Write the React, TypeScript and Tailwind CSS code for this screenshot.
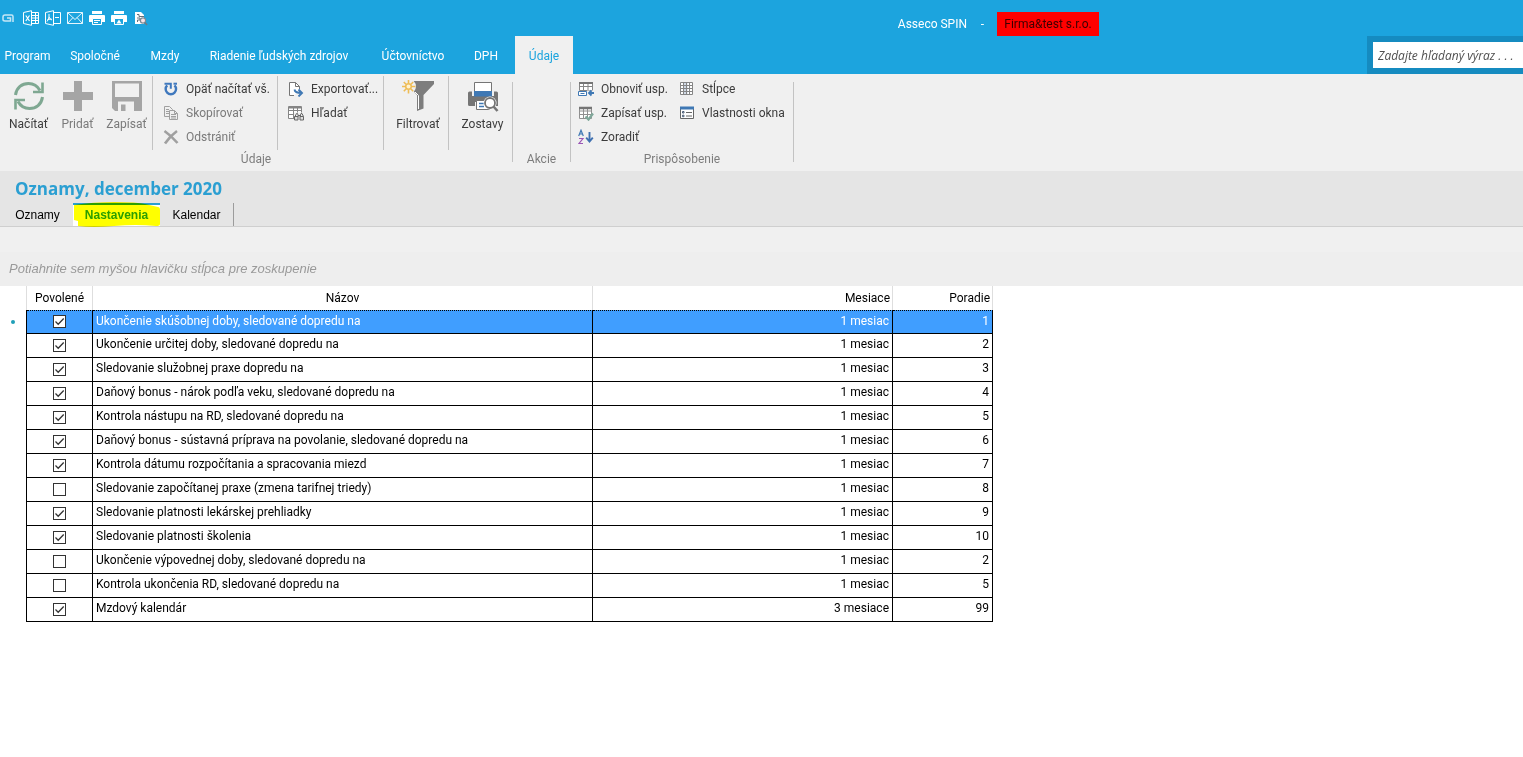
import type { ReactNode } from 'react';

type IconProps = { className?: string };

function MiniLogo() {
  return (
    <svg viewBox="0 0 12 16" className="h-4 w-3" fill="none" stroke="#c5e6f6" strokeWidth="1.500">
      <path d="M11 12V6.500Q11 5 9.500 5H3Q1 5 1 7v2.500Q1 11 3 11h5.500V8H5" />
    </svg>
  );
}

function ExcelIcon() {
  return (
    <svg viewBox="0 0 16 16" className="size-4" fill="none" stroke="#fff">
      <path d="M.5 2.500 8.500.700v14.600L.5 13.500zM8.500 2.500h7v11h-7M12.500 2.500v11M8.500 5.500h7M8.500 8h7M8.500 10.500h7" />
      <path d="M2.800 5.500l3.700 5.500M6.500 5.500 2.800 11" strokeWidth="1.200" />
    </svg>
  );
}

function PdfIcon() {
  return (
    <svg viewBox="0 0 16 16" className="size-4" fill="none" stroke="#fff">
      <path d="M.5 2.500 8.500.700v14.600L.5 13.500zM8.500 2.500h7v11h-7M10 7.500h4" />
      <path d="M4 4v3q0 2-2 4.500M4 7q1 2.500 3 3M2.500 9.500 6.500 9" />
    </svg>
  );
}

function MailIcon() {
  return (
    <svg viewBox="0 0 16 16" className="size-4" fill="none" stroke="#e6f6fd">
      <path d="M.5 2.500h15v11H.5zM.5 2.500 8 9.500l7.500-7M.5 13.500l5.500-6M15.500 13.500l-5.500-6" />
    </svg>
  );
}

function PrinterIcon({ preview }: { preview?: boolean }) {
  return (
    <svg viewBox="0 0 16 16" className="size-4">
      <path d="M3 1h10v3H3zM1 5h14q1 0 1 1v6h-3V9H3v3H0V6q0-1 1-1z" fill="#fff" />
      <path d="M3.500 8.500h9v6h-9z" fill="#1ca4de" stroke="#fff" />
      {preview ? (
        <path d="M8 9.500l2.500 4h-5z" fill="#fff" />
      ) : (
        <path d="M5 10.500h6M5 12.500h4" stroke="#fff" />
      )}
    </svg>
  );
}

function DocSearchIcon() {
  return (
    <svg viewBox="0 0 16 16" className="size-4">
      <path d="M2 2h6l3 3v9H2z" fill="#fff" />
      <path d="M4 4.500h2v2h5M4 8h3v2H4.500v2" stroke="#65727c" fill="none" />
      <circle cx="10" cy="10.500" r="2.600" fill="#f8e4e8" stroke="#7b8a96" strokeWidth="1.200" />
      <path d="M12 12.500l2 2.500" stroke="#6d7a86" strokeWidth="1.600" />
    </svg>
  );
}

function RefreshIcon({ className }: IconProps) {
  return (
    <svg viewBox="0 0 32 32" className={className} fill="none" stroke="#7fa892" strokeWidth="3">
      <path d="M2.500 15C3.500 7.500 9 3.500 15.500 3.500c5 0 9 2.500 11.500 7" />
      <path d="M29.500 2.500v9.500H20" strokeWidth="2.600" />
      <path d="M29.500 17C28.500 24.500 23 28.500 16.500 28.500c-5 0-9-2.500-11.500-7" />
      <path d="M2.500 29.500V20H12" strokeWidth="2.600" />
    </svg>
  );
}

function PlusIcon({ className }: IconProps) {
  return (
    <svg viewBox="0 0 32 32" className={className} fill="#a5a5a5">
      <path d="M12 1h8v11h11v8H20v11h-8V20H1v-8h11z" />
    </svg>
  );
}

function DiskIcon({ className }: IconProps) {
  return (
    <svg viewBox="0 0 32 32" className={className}>
      <path d="M1 1h30v30H4l-3-3z" fill="#a5a5a5" />
      <path d="M4 3.500h24V17H4zM7 21.500h16V31H7z" fill="#f0f0f0" />
      <path d="M10 24.500h4.500V31H10z" fill="#a5a5a5" />
    </svg>
  );
}

function FunnelIcon({ className }: IconProps) {
  return (
    <svg viewBox="0 0 32 32" className={className}>
      <path d="M10 1h22v3L21.500 15v13.500L15 31V15L9.500 9z" fill="#7d7d7d" />
      <path d="M13 12l3.500 3.500V29" stroke="#fff" fill="none" />
      <circle cx="6.500" cy="6.500" r="7.500" fill="#f0f0f0" />
      <path
        d="M6.500 0v3M6.500 10v3.500M0 6.500h3M10 6.500h3.500M1.800 2l2.200 2.200M9 9l2.200 2.200M11.200 2 9 4.200M4 9l-2.200 2.200"
        stroke="#eebc55"
        strokeWidth="1.600"
      />
      <circle cx="6.500" cy="6.500" r="2.800" fill="#fff2cf" stroke="#eebc55" strokeWidth="1.500" />
    </svg>
  );
}

function ReportsIcon({ className }: IconProps) {
  return (
    <svg viewBox="0 0 32 32" className={className}>
      <path d="M1 13q0-1.500 1.500-1.500H5V16h22v-4.500h2.500Q31 11.500 31 13v13h-6v-4H8v4H2.500Q1 26 1 24.500z" fill="#757575" />
      <path d="M7.500 2.500h17V12h-17z" fill="#fff" stroke="#757575" />
      <path d="M7 11h18v5.500H7z" fill="#3f78b4" />
      <path d="M9.500 20.500h13v9h-13z" fill="#fff" stroke="#757575" />
      <path d="M12 23.500h5M12 26.500h5" stroke="#3f78b4" strokeWidth="1.300" />
      <circle cx="23" cy="23" r="6.500" fill="#fff" />
      <circle cx="23" cy="23" r="5" fill="#fff" stroke="#757575" strokeWidth="1.800" />
      <path d="M26.500 26.500 30.500 31" stroke="#757575" strokeWidth="2.600" />
    </svg>
  );
}

function ReloadIcon() {
  return (
    <svg viewBox="0 0 16 16" className="size-4" fill="none" stroke="#3f78bd" strokeWidth="2.400">
      <path d="M4.200 4.300A5.200 5.200 0 1 0 11.500 4.300" />
      <path d="M1.500 2.700h6.300v5" strokeWidth="2" />
      <path d="M10.500 2.700h3.500" strokeWidth="2" />
    </svg>
  );
}

function CopyIcon() {
  return (
    <svg viewBox="0 0 16 16" className="size-4" fill="#f0f0f0" stroke="#a0a0a0">
      <path d="M1.500 1.500h5l3 3v7h-8z" />
      <path d="M3 4.500h3M3 6.500h4M3 8.500h3" />
      <path d="M6.500 5.500h5l3 3v6h-8z" />
      <path d="M11.500 5.500v3h3M8 9.500h5M8 11.500h5M8 13h5" fill="none" />
    </svg>
  );
}

function DeleteIcon() {
  return (
    <svg viewBox="0 0 16 16" className="size-4" fill="none" stroke="#a0a0a0" strokeWidth="2.600">
      <path d="M1.500 2Q8 6.500 14.500 14M14 2Q7 7 2 14.500" />
    </svg>
  );
}

function ExportIcon() {
  return (
    <svg viewBox="0 0 16 16" className="size-4" fill="none">
      <path d="M6 14.500H1.500v-13h6l4 4V8" fill="#fff" stroke="#757575" />
      <path d="M7.500 1.500v4h4" stroke="#757575" />
      <path d="M6.500 8.500Q7 12 13.500 12M10.500 8.500l3.500 3.500-3.500 3.500" stroke="#3f78b4" strokeWidth="1.900" />
    </svg>
  );
}

function FindIcon() {
  return (
    <svg viewBox="0 0 16 16" className="size-4" fill="none" stroke="#858585">
      <path d="M.5 1.500h13v12H.5zM.5 5.500h13M.5 9.500h13M5.500 3v10M9.500 3v10" fill="#fff" />
      <path d="M1 2.500h12" strokeWidth="2" />
      <path d="M6 7.500h10v8H6z" fill="#f0f0f0" stroke="none" />
      <path d="M7 11.500 8.500 8.500h1l1 3M15.500 11.500 14 8.500h-1l-1 3M10 10.500h3" stroke="#666" />
      <path d="M6.500 11.500h3.500v3.500H6.500zM12 11.500h3.500v3.500H12z" fill="#ddd" stroke="#666" />
    </svg>
  );
}

function RestoreLayoutIcon() {
  return (
    <svg viewBox="0 0 16 16" className="size-4" fill="none">
      <path d="M1.500 1.500h13v8h-13zM1.500 5.500h13M5.500 2v7.500M10 2v7.500" fill="#fff" stroke="#858585" />
      <path d="M1 2h14" stroke="#757575" strokeWidth="2" />
      <path d="M9 9.500h7V15H9z" fill="#f0f0f0" />
      <path d="M.5 10.500h8v4h-8zM2.500 12.500h4" fill="#fff" stroke="#3f78b4" />
      <path d="M16 12H11M13.500 9.500 11 12l2.500 2.500" stroke="#3f78b4" strokeWidth="1.800" />
    </svg>
  );
}

function SaveLayoutIcon() {
  return (
    <svg viewBox="0 0 16 16" className="size-4" fill="none">
      <path d="M1.500 2.500h12v11h-12zM1.500 6h12M1.500 9.500h12M5.500 3v10M9.500 3v10" fill="#fff" stroke="#909090" />
      <path d="M1 3h13" stroke="#757575" strokeWidth="2.500" />
      <path d="M7.500 11.500l3 3L15 8.500" stroke="#7fa89a" strokeWidth="2.300" />
    </svg>
  );
}

function SortIcon() {
  return (
    <svg viewBox="0 0 16 16" className="size-4" fill="none">
      <path d="M.7 7 3 1.200 5.300 7M1.500 5h3" stroke="#3f78b4" strokeWidth="1.200" />
      <path d="M1 9.500h4L1 14.500h4" stroke="#9a55b5" strokeWidth="1.200" />
      <path d="M11.500 3v9.500M8.200 8.700l3.300 3.800 3.300-3.800" stroke="#3f70b0" strokeWidth="1.900" />
    </svg>
  );
}

function ColumnsIcon() {
  return (
    <svg viewBox="0 0 16 16" className="size-4" fill="none">
      <path d="M1.500 1.500h12v12h-12z" fill="#fff" />
      <path d="M4.500 2h4v11h-4z" fill="#cfd9e6" />
      <path d="M1.500 1.500h12v12h-12zM1.500 4.500h12M1.500 7.500h12M1.500 10.500h12M4.500 2v11M7.500 2v11M10.500 2v11" stroke="#858585" />
    </svg>
  );
}

function WindowIcon() {
  return (
    <svg viewBox="0 0 16 16" className="size-4" fill="none">
      <path d="M1.500 2.500h13v11h-13z" fill="#fff" stroke="#666" />
      <path d="M1 3h14" stroke="#3f78b4" strokeWidth="3" />
      <path d="M7 7.500h6M7 11h6" stroke="#666" />
      <path d="M3.500 6.500h1.500v1.500H3.500zM3.500 10.200h1.500v1.500H3.500z" stroke="#4c5f78" />
    </svg>
  );
}

const menuTabs = [
  { label: 'Program', width: 'w-[55px]' },
  { label: 'Spoločné', width: 'w-20' },
  { label: 'Mzdy', width: 'w-[60px]' },
  { label: 'Riadenie ľudských zdrojov', width: 'w-[168px]' },
  { label: 'Účtovníctvo', width: 'w-[100px]' },
  { label: 'DPH', width: 'w-[46px]' },
];

const rows = [
  { on: true, name: 'Ukončenie skúšobnej doby, sledované dopredu na', months: '1 mesiac', order: 1 },
  { on: true, name: 'Ukončenie určitej doby, sledované dopredu na', months: '1 mesiac', order: 2 },
  { on: true, name: 'Sledovanie služobnej praxe dopredu na', months: '1 mesiac', order: 3 },
  { on: true, name: 'Daňový bonus - nárok podľa veku, sledované dopredu na', months: '1 mesiac', order: 4 },
  { on: true, name: 'Kontrola nástupu na RD, sledované dopredu na', months: '1 mesiac', order: 5 },
  { on: true, name: 'Daňový bonus - sústavná príprava na povolanie, sledované dopredu na', months: '1 mesiac', order: 6 },
  { on: true, name: 'Kontrola dátumu rozpočítania a spracovania miezd', months: '1 mesiac', order: 7 },
  { on: false, name: 'Sledovanie započítanej praxe (zmena tarifnej triedy)', months: '1 mesiac', order: 8 },
  { on: true, name: 'Sledovanie platnosti lekárskej prehliadky', months: '1 mesiac', order: 9 },
  { on: true, name: 'Sledovanie platnosti školenia', months: '1 mesiac', order: 10 },
  { on: false, name: 'Ukončenie výpovednej doby, sledované dopredu na', months: '1 mesiac', order: 2 },
  { on: false, name: 'Kontrola ukončenia RD, sledované dopredu na', months: '1 mesiac', order: 5 },
  { on: true, name: 'Mzdový kalendár', months: '3 mesiace', order: 99 },
];

function BigButton({ icon, label, disabled }: { icon: ReactNode; label: string; disabled?: boolean }) {
  return (
    <button
      type="button"
      disabled={disabled}
      className="flex w-[49px] flex-col items-center gap-1 pt-1 text-[#3c3c3c] disabled:text-[#7a7a7a]"
    >
      {icon}
      <span className="leading-4">{label}</span>
    </button>
  );
}

function SmallButton({ icon, label, disabled }: { icon: ReactNode; label: string; disabled?: boolean }) {
  return (
    <button
      type="button"
      disabled={disabled}
      className="flex h-6 items-center gap-[7px] text-[#3c3c3c] disabled:text-[#7a7a7a]"
    >
      {icon}
      <span>{label}</span>
    </button>
  );
}

function InnerDivider() {
  return <div className="h-[74px] w-px shrink-0 bg-[#c3c3c3]" />;
}

function GroupDivider() {
  return <div className="mt-2 h-20 w-px shrink-0 bg-[#c3c3c3]" />;
}

function GroupLabel({ children }: { children: ReactNode }) {
  return <div className="text-center leading-4 text-[#7d7d7d]">{children}</div>;
}

function Ribbon() {
  return (
    <div className="flex h-[97px] bg-[#f0f0f0]">
      <section className="flex flex-col pt-0.5">
        <div className="flex h-[75px]">
          <div className="flex w-[152px] pl-1">
            <BigButton icon={<RefreshIcon className="size-8" />} label="Načítať" />
            <BigButton icon={<PlusIcon className="size-8" />} label="Pridať" disabled />
            <BigButton icon={<DiskIcon className="size-8" />} label="Zapísať" disabled />
          </div>
          <InnerDivider />
          <div className="w-[124px] pt-px pl-[10px]">
            <SmallButton icon={<ReloadIcon />} label="Opäť načítať vš." />
            <SmallButton icon={<CopyIcon />} label="Skopírovať" disabled />
            <SmallButton icon={<DeleteIcon />} label="Odstrániť" disabled />
          </div>
          <InnerDivider />
          <div className="w-[105px] pt-px pl-[10px]">
            <SmallButton icon={<ExportIcon />} label="Exportovať..." />
            <SmallButton icon={<FindIcon />} label="Hľadať" />
          </div>
          <InnerDivider />
          <div className="flex w-16 justify-center pl-1">
            <BigButton icon={<FunnelIcon className="size-8" />} label="Filtrovať" />
          </div>
          <InnerDivider />
          <div className="flex w-[63px] justify-center pl-1">
            <BigButton icon={<ReportsIcon className="size-8" />} label="Zostavy" />
          </div>
        </div>
        <GroupLabel>Údaje</GroupLabel>
      </section>
      <GroupDivider />
      <section className="w-[57px] pt-[77px]">
        <GroupLabel>Akcie</GroupLabel>
      </section>
      <GroupDivider />
      <section className="flex w-[222px] flex-col pt-0.5">
        <div className="flex h-[75px] gap-[10px] pt-px pl-[7px]">
          <div className="w-[91px]">
            <SmallButton icon={<RestoreLayoutIcon />} label="Obnoviť usp." />
            <SmallButton icon={<SaveLayoutIcon />} label="Zapísať usp." />
            <SmallButton icon={<SortIcon />} label="Zoradiť" />
          </div>
          <div>
            <SmallButton icon={<ColumnsIcon />} label="Stĺpce" />
            <SmallButton icon={<WindowIcon />} label="Vlastnosti okna" />
          </div>
        </div>
        <GroupLabel>Prispôsobenie</GroupLabel>
      </section>
      <GroupDivider />
    </div>
  );
}

function TitleBar() {
  return (
    <header className="bg-[#1ca4de] text-white">
      <div className="flex h-9 items-end">
        <div className="flex items-center gap-1.5 self-center pl-0.5">
          <button type="button" aria-label="Asseco SPIN" className="mr-[3px]"><MiniLogo /></button>
          <button type="button" aria-label="Excel"><ExcelIcon /></button>
          <button type="button" aria-label="PDF"><PdfIcon /></button>
          <button type="button" aria-label="E-mail"><MailIcon /></button>
          <button type="button" aria-label="Tlač"><PrinterIcon /></button>
          <button type="button" aria-label="Tlačiareň"><PrinterIcon preview /></button>
          <button type="button" aria-label="Náhľad"><DocSearchIcon /></button>
        </div>
        <div className="mr-[424px] ml-auto flex h-6 items-center">
          <span>Asseco SPIN</span>
          <span className="w-[30px] pl-px text-center">-</span>
          <span className="flex h-6 w-[102px] items-center justify-center bg-[#ff0000] text-[#3d0000]">
            Firma&amp;test s.r.o.
          </span>
        </div>
      </div>
      <div className="flex h-[38px]">
        <nav className="flex">
          {menuTabs.map((t) => (
            <button key={t.label} type="button" className={`pt-0.5 ${t.width}`}>
              {t.label}
            </button>
          ))}
          <button type="button" className="ml-1.5 w-[58px] bg-[#f0f0f0] pt-0.5 text-[#1ca4de]">
            Údaje
          </button>
        </nav>
        <div className="ml-auto w-[156px] bg-[#158bc0] py-1.5 pl-1.5">
          <input
            type="text"
            aria-label="Hľadať"
            placeholder="Zadajte hľadaný výraz . . ."
            className="h-[26px] w-full bg-white px-[5px] font-['Open_Sans','Noto_Sans',sans-serif] text-black italic placeholder:text-[#505050]"
          />
        </div>
      </div>
    </header>
  );
}

function PageHeader() {
  return (
    <div className="border-b border-[#cfcfcf] bg-[#e5e5e5]">
      <h1 className="h-8 pt-1.5 pl-[15px] font-['Open_Sans','Noto_Sans',sans-serif] text-[17px] leading-6 font-bold text-[#2b9fd2]">
        Oznamy, december 2020
      </h1>
      <div className="flex h-[23px] font-['Liberation_Sans',Arial,sans-serif] text-black">
        <button type="button" className="w-[73px] pl-0.5">Oznamy</button>
        <button
          type="button"
          className="relative w-[87px] border-t-2 border-[#2b9fd2] bg-white pb-0.5 font-bold text-[#2b9fd2]"
        >
          Nastavenia
          <svg
            viewBox="0 0 87 26"
            className="pointer-events-none absolute -top-1 left-0 h-[26px] w-[87px] mix-blend-multiply"
          >
            <path d="M1 4Q20 1 42 1t30 2l13 3q2 0 2 3v14q0 2-4 2-20-2-42 0t-36 0V20L1 19z" fill="#ffff00" />
          </svg>
        </button>
        <button type="button" className="w-[73px]">Kalendar</button>
        <div className="w-px bg-[#9c9c9c]" />
      </div>
    </div>
  );
}

function SettingsTable() {
  const head = 'h-6 border-r border-[#dedede] font-normal';
  const cell = 'h-6 border-r border-b border-black p-0';
  return (
    <table className="w-[993px] table-fixed border-separate border-spacing-0 leading-4 text-black">
      <colgroup>
        <col className="w-[27px]" />
        <col className="w-[66px]" />
        <col className="w-[500px]" />
        <col className="w-[300px]" />
        <col className="w-[100px]" />
      </colgroup>
      <thead>
        <tr>
          <th className={`${head} p-0`} aria-label="Stav" />
          <th className={`${head} p-0`}>Povolené</th>
          <th className={`${head} p-0`}>Názov</th>
          <th className={`${head} py-0 pr-0.5 pl-0 text-right`}>Mesiace</th>
          <th className={`${head} py-0 pr-0.5 pl-0 text-right`}>Poradie</th>
        </tr>
      </thead>
      <tbody>
        {rows.map((r, i) => {
          const top = i === 0 ? 'border-t [border-top-style:dotted]' : '';
          return (
            <tr key={r.name} className={i === 0 ? 'bg-[#409eff] text-white' : 'bg-white'}>
              <td className="h-6 border-r border-black bg-white p-0">
                {i === 0 && <div className="ml-[11px] size-1 rounded-full bg-[#1f9fb8]" />}
              </td>
              <td className={`${cell} ${top} ${i === 0 ? 'pb-px' : ''}`}>
                <label className="relative mx-auto block size-[13px]">
                  <input
                    type="checkbox"
                    defaultChecked={r.on}
                    aria-label={r.name}
                    className="peer block size-[13px] appearance-none border border-[#333] bg-white"
                  />
                  <svg
                    viewBox="0 0 13 13"
                    className="pointer-events-none invisible absolute inset-0 size-[13px] peer-checked:visible"
                    fill="none"
                    stroke="#333"
                    strokeWidth="1.300"
                  >
                    <path d="M2.500 6.500 5.200 9.200 10.700 3.500" />
                  </svg>
                </label>
              </td>
              <td className={`${cell} ${top} pb-[3px] pl-[3px]`}>{r.name}</td>
              <td className={`${cell} ${top} pr-[3px] pb-[3px] text-right`}>{r.months}</td>
              <td className={`${cell} ${top} pr-[3px] pb-[3px] text-right`}>{r.order}</td>
            </tr>
          );
        })}
      </tbody>
    </table>
  );
}

export default function App() {
  return (
    <div className="flex min-h-screen flex-col overflow-x-hidden bg-white font-['Roboto','Open_Sans',sans-serif] text-[12px] leading-4 whitespace-nowrap">
      <TitleBar />
      <Ribbon />
      <PageHeader />
      <div className="h-[25px] bg-[#f0f0f0]" />
      <div className="flex h-[34px] items-center bg-[#eeeeee] pl-[9px] font-['Liberation_Sans',Arial,sans-serif] text-[13px] text-[#9a9a9a] italic">
        Potiahnite sem myšou hlavičku stĺpca pre zoskupenie
      </div>
      <main className="flex-1">
        <SettingsTable />
      </main>
    </div>
  );
}
